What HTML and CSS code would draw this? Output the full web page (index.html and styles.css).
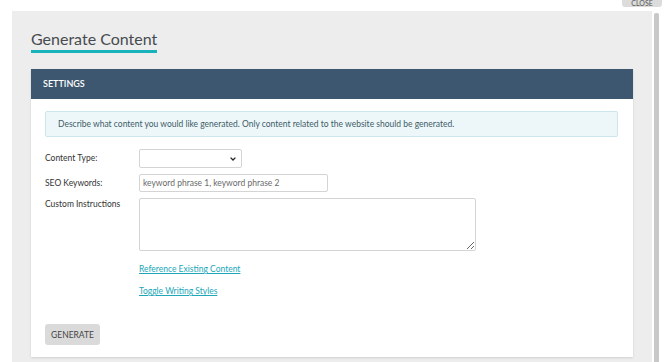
FILE: index.html
```html
<!DOCTYPE html>
<html lang="en">
<head>
<meta charset="utf-8">
<title>Generate Content</title>
<link rel="stylesheet" href="styles.css">
</head>
<body>
<button class="close-btn" type="button">CLOSE</button>
<div class="window">
  <div class="panel">
    <h1 class="title">Generate Content</h1>
    <section class="card">
      <header class="card-head">SETTINGS</header>
      <div class="card-body">
        <div class="info">Describe what content you would like generated. Only content related to the website should be generated.</div>
        <div class="form">
          <label class="lbl lbl-select">Content Type:</label>
          <div class="field sel-wrap">
            <select class="sel"><option></option></select>
            <svg class="chev" width="6" height="4" viewBox="0 0 6 4"><path d="M0.6 0.6 L3 3 L5.4 0.6" fill="none" stroke="#222" stroke-width="1.3"/></svg>
          </div>
          <label class="lbl lbl-input">SEO Keywords:</label>
          <div class="field"><input class="inp" type="text" placeholder="keyword phrase 1, keyword phrase 2"></div>
          <label class="lbl lbl-area">Custom Instructions</label>
          <div class="field"><textarea class="area"></textarea></div>
          <span></span>
          <div class="links">
            <a href="#" class="lnk">Reference Existing Content</a>
            <a href="#" class="lnk">Toggle Writing Styles</a>
          </div>
        </div>
        <button class="gen-btn" type="button">GENERATE</button>
      </div>
    </section>
  </div>
  <div class="scrollbar"></div>
</div>
</body>
</html>
```
FILE: styles.css
```css
* { box-sizing: border-box; }
html, body { margin: 0; padding: 0; background: #fff; height: 100%; overflow: hidden; }
body { font-family: Lato, "Open Sans", "Liberation Sans", sans-serif; color: #333; }

.close-btn {
  position: absolute;
  top: -4px;
  left: 622px;
  width: 40px;
  height: 11px;
  border: none;
  border-radius: 3px;
  background: #dcdcdc;
  color: #555;
  font-family: Lato, sans-serif;
  font-size: 7px;
  padding: 3px 0 0;
  line-height: 8px;
}

.window {
  display: flex;
  gap: 2px;
  padding: 11px 0 0 12px;
  height: 100%;
}
.panel {
  width: 640px;
  background: #ededed;
  padding: 18px 19px 0;
  height: 100%;
}
.scrollbar {
  width: 5px;
  margin-top: 2px;
  background: #c8c8c8;
  border-radius: 2px 2px 0 0;
}

.title {
  display: inline-block;
  margin: 0;
  font-size: 16px;
  font-weight: 400;
  line-height: 20px;
  color: #474b50;
  padding-bottom: 1px;
  border-bottom: 3px solid #17b2bc;
}

.card {
  margin-top: 16px;
  width: 602px;
  background: #fff;
  box-shadow: 0 1px 2px rgba(0,0,0,0.12);
}
.card-head {
  height: 30px;
  background: #3d5771;
  color: #fff;
  font-size: 9px;
  font-weight: 600;
  line-height: 30px;
  padding-left: 12px;
}
.card-body {
  padding: 12px 15px 12px 14px;
}
.info {
  height: 26px;
  background: #edf7f9;
  border: 1px solid #cde5ec;
  border-radius: 2px;
  color: #3e5c68;
  font-size: 8.5px;
  line-height: 24px;
  padding-left: 12px;
}

.form {
  display: grid;
  grid-template-columns: 94px 1fr;
  row-gap: 6px;
  margin-top: 12px;
  align-items: start;
}
.lbl {
  font-size: 8.5px;
  color: #333;
}
.lbl-select { line-height: 19px; }
.lbl-input { line-height: 18px; }
.lbl-area { line-height: 12px; }
.field { display: flex; }
.sel-wrap { position: relative; width: 103px; }
.sel {
  width: 103px;
  height: 19px;
  border: 1px solid #d4d4d4;
  border-radius: 2px;
  background: #fff;
  font-size: 9px;
  appearance: none;
  -webkit-appearance: none;
}
.chev {
  position: absolute;
  right: 6px;
  top: 8px;
}
.inp {
  width: 189px;
  height: 18px;
  border: 1px solid #d4d4d4;
  border-radius: 2px;
  padding: 0 3px;
  font-family: Lato, sans-serif;
  font-size: 8.5px;
  color: #555;
}
.inp::placeholder { color: #6a6a6a; }
.area {
  width: 337px;
  height: 53px;
  border: 1px solid #d4d4d4;
  border-radius: 2px;
  resize: vertical;
}
.links {
  display: flex;
  flex-direction: column;
  align-items: flex-start;
  gap: 10px;
  padding-top: 6px;
}
.lnk {
  color: #21a8b8;
  font-size: 8.5px;
  line-height: 12px;
}

.gen-btn {
  margin-top: 27px;
  width: 55px;
  height: 21px;
  border: none;
  border-radius: 3px;
  background: #dadada;
  color: #444;
  font-family: Lato, sans-serif;
  font-size: 8.5px;
  padding: 0;
}
```
